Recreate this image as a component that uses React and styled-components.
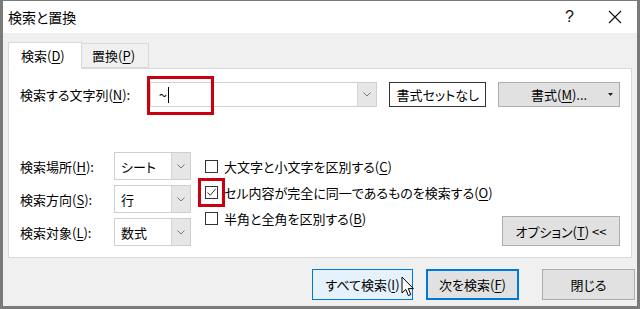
import React from 'react'
import styled, { createGlobalStyle } from 'styled-components'

const Global = createGlobalStyle`
  html, body {
    margin: 0;
    padding: 0;
    background: #7a7a7a;
  }
  body {
    font-family: 'Noto Sans CJK JP', 'Noto Sans', sans-serif;
    font-feature-settings: 'palt';
    font-size: 13px;
    color: #000;
  }
`

const Frame = styled.div`
  width: 634px;
  height: 305px;
  margin: 1px 3px 3px 3px;
  background: #f0f0f0;
  display: flex;
  flex-direction: column;
  position: relative;
  overflow: hidden;
`

const TitleBar = styled.div`
  height: 32px;
  background: #fff;
  display: flex;
  align-items: center;
  padding: 0 0 0 5px;
  font-size: 14px;
`

const Title = styled.div`
  flex: 1;
`

const TitleButton = styled.div`
  width: 45px;
  display: flex;
  justify-content: center;
  font-size: 16px;
  font-family: 'Liberation Sans', sans-serif;
  color: #111;
`

const Body = styled.div`
  flex: 1;
  padding: 9px 0 0 5px;
  display: flex;
  flex-direction: column;
`

const Tabs = styled.div`
  display: flex;
  align-items: flex-end;
  height: 26px;
  position: relative;
  z-index: 1;
`

const Tab = styled.div`
  box-sizing: border-box;
  height: ${p => (p.$active ? 27 : 25)}px;
  padding: 0 ${p => (p.$active ? 12 : 10)}px;
  width: ${p => (p.$active ? 74 : 67)}px;
  display: flex;
  align-items: center;
  background: ${p => (p.$active ? '#fff' : '#f0f0f0')};
  border: 1px solid #d9d9d9;
  border-bottom: ${p => (p.$active ? '1px solid #fff' : '1px solid #d9d9d9')};
  border-left: ${p => (p.$active ? '1px solid #d9d9d9' : 'none')};
  margin-bottom: ${p => (p.$active ? -1 : 0)}px;
`

const Key = styled.span`
  text-decoration: underline;
  text-underline-offset: 2px;
`

const Panel = styled.div`
  box-sizing: border-box;
  width: 624px;
  height: 190px;
  background: #fff;
  border: 1px solid #d9d9d9;
  padding: 13px 11px 11px 11px;
  display: flex;
  flex-direction: column;
  justify-content: space-between;
`

const TopRow = styled.div`
  display: flex;
  align-items: center;
  height: 25px;
`

const Label = styled.div`
  width: ${p => p.$w}px;
  white-space: nowrap;
`

const Combo = styled.div`
  box-sizing: border-box;
  width: ${p => p.$w}px;
  height: ${p => p.$h}px;
  border: 1px solid #cfcfcf;
  display: flex;
  align-items: stretch;
  position: relative;
  background: #fff;
`

const ComboText = styled.div`
  flex: 1;
  display: flex;
  align-items: center;
  padding-left: ${p => p.$pad || 4}px;
  font-size: ${p => p.$size || 13}px;
`

const Caret = styled.span`
  display: inline-block;
  width: 1px;
  height: 16px;
  background: #000;
  margin-left: 1px;
`

const DropButton = styled.div`
  width: 18px;
  background: #e6e6e6;
  border-left: 1px solid #d4d4d4;
  display: flex;
  align-items: center;
  justify-content: center;
`

const Highlight = styled.div`
  position: absolute;
  left: ${p => p.$l}px;
  top: ${p => p.$t}px;
  width: ${p => p.$w}px;
  height: ${p => p.$h}px;
  border: 3px solid #c8000f;
  box-sizing: border-box;
  pointer-events: none;
`

const Button = styled.div`
  box-sizing: border-box;
  width: ${p => p.$w}px;
  height: ${p => p.$h}px;
  margin-left: ${p => p.$ml || 0}px;
  display: flex;
  align-items: center;
  justify-content: center;
  background: ${p => p.$bg || '#e1e1e1'};
  border: ${p => p.$border || '1px solid #adadad'};
  position: relative;
  white-space: nowrap;
`

const SmallArrow = styled.svg`
  position: absolute;
  right: 6px;
  top: 10px;
`

const Lower = styled.div`
  display: flex;
  align-items: flex-end;
`

const Fields = styled.div`
  display: flex;
  flex-direction: column;
  gap: 5px;
`

const FieldRow = styled.div`
  display: flex;
  align-items: center;
`

const Checks = styled.div`
  display: flex;
  flex-direction: column;
  align-self: flex-start;
  margin-left: 14px;
  margin-top: 1px;
`

const CheckRow = styled.div`
  display: flex;
  align-items: center;
  height: 26px;
  position: relative;
`

const Box = styled.div`
  box-sizing: border-box;
  width: 13px;
  height: 13px;
  border: 1px solid #333;
  background: #fff;
  margin-right: 6px;
  display: flex;
  align-items: center;
  justify-content: center;
`

const Spacer = styled.div`
  flex: 1;
`

const Footer = styled.div`
  display: flex;
  justify-content: flex-end;
  padding: 11px 2px 0 0;
`

const Cursor = styled.svg`
  position: absolute;
  left: 398px;
  top: 275px;
`

const Chevron = () => (
  <svg width="8" height="5" viewBox="0 0 8 5">
    <path d="M0.5 0.5 L4 4 L7.5 0.5" fill="none" stroke="#777" strokeWidth="1" />
  </svg>
)

const Select = ({ value }) => (
  <Combo $w={77} $h={28}>
    <ComboText $pad={6}>{value}</ComboText>
    <DropButton>
      <Chevron />
    </DropButton>
  </Combo>
)

const Check = ({ checked, children, highlight }) => (
  <CheckRow>
    <Box>
      {checked && (
        <svg width="11" height="11" viewBox="0 0 11 11">
          <path d="M1.5 5.5 L4.2 8.3 L9.5 2" fill="none" stroke="#333" strokeWidth="1" />
        </svg>
      )}
    </Box>
    {highlight && <Highlight $l={-7} $t={-1} $w={27} $h={29} />}
    <span>{children}</span>
  </CheckRow>
)

const App = () => {
  return (
    <>
      <Global />
      <Frame>
        <TitleBar>
          <Title>検索と置換</Title>
          <TitleButton>?</TitleButton>
          <TitleButton>
            <svg width="14" height="14" viewBox="0 0 14 14">
              <path d="M1 1 L13 13 M13 1 L1 13" stroke="#111" strokeWidth="1.1" />
            </svg>
          </TitleButton>
        </TitleBar>
        <Body>
          <Tabs>
            <Tab $active>
              検索(<Key>D</Key>)
            </Tab>
            <Tab>
              置換(<Key>P</Key>)
            </Tab>
          </Tabs>
          <Panel>
            <TopRow>
              <Label $w={130}>
                検索する文字列(<Key>N</Key>):
              </Label>
              <Combo $w={228} $h={25}>
                <ComboText $pad={8} $size={15}>
                  ~<Caret />
                </ComboText>
                <DropButton>
                  <Chevron />
                </DropButton>
                <Highlight $l={-4} $t={-7} $w={67} $h={39} />
              </Combo>
              <Button $w={97} $h={25} $ml={12} $bg="#fff" $border="1px solid #333">
                書式セットなし
              </Button>
              <Button $w={122} $h={25} $ml={12}>
                書式(<Key>M</Key>)...
                <SmallArrow width="5" height="3" viewBox="0 0 5 3">
                  <path d="M0 0 L5 0 L2.5 3 Z" fill="#222" />
                </SmallArrow>
              </Button>
            </TopRow>
            <Lower>
              <Fields>
                <FieldRow>
                  <Label $w={94}>
                    検索場所(<Key>H</Key>):
                  </Label>
                  <Select value="シート" />
                </FieldRow>
                <FieldRow>
                  <Label $w={94}>
                    検索方向(<Key>S</Key>):
                  </Label>
                  <Select value="行" />
                </FieldRow>
                <FieldRow>
                  <Label $w={94}>
                    検索対象(<Key>L</Key>):
                  </Label>
                  <Select value="数式" />
                </FieldRow>
              </Fields>
              <Checks>
                <Check>
                  大文字と小文字を区別する(<Key>C</Key>)
                </Check>
                <Check checked highlight>
                  セル内容が完全に同一であるものを検索する(<Key>O</Key>)
                </Check>
                <Check>
                  半角と全角を区別する(<Key>B</Key>)
                </Check>
              </Checks>
              <Spacer />
              <Button $w={118} $h={30}>
                オプション(<Key>T</Key>) &lt;&lt;
              </Button>
            </Lower>
          </Panel>
          <Footer>
            <Button $w={101} $h={31} $bg="#e5f1fb" $border="1px solid #0078d7">
              すべて検索(<Key>I</Key>)
            </Button>
            <Button $w={93} $h={31} $ml={13} $border="2px solid #0078d7">
              次を検索(<Key>F</Key>)
            </Button>
            <Button $w={93} $h={31} $ml={23}>
              閉じる
            </Button>
          </Footer>
        </Body>
        <Cursor width="14" height="22" viewBox="0 0 14 22">
          <path
            d="M1 1 L1 17 L4.8 13.4 L7.4 19.6 L9.8 18.6 L7.3 12.6 L12.4 12.6 Z"
            fill="#fff"
            stroke="#000"
            strokeWidth="1"
            strokeLinejoin="round"
          />
        </Cursor>
      </Frame>
    </>
  )
}

export default App
